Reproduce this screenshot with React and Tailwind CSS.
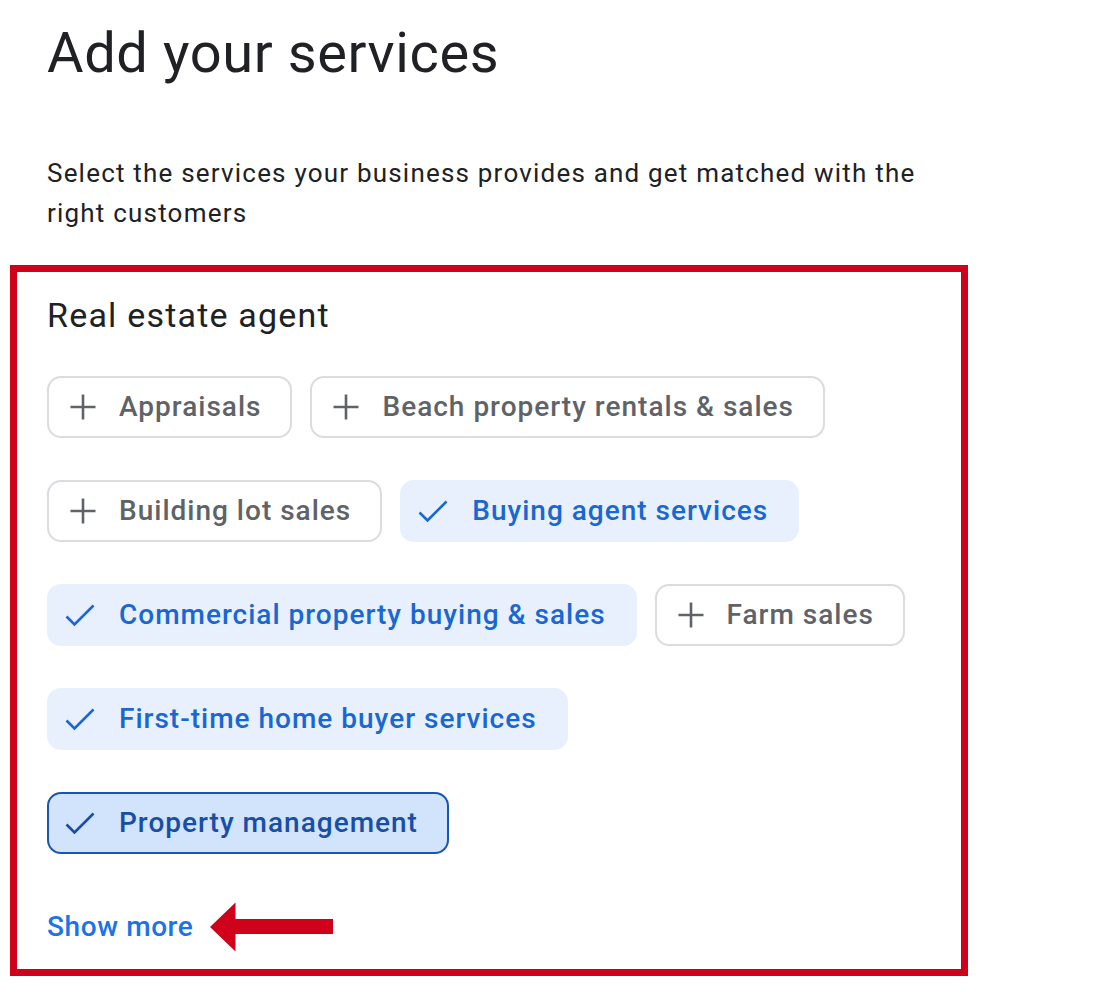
import React from "react";

const Plus = ({ className }) => (
  <svg width="28" height="28" viewBox="0 0 28 28" className={className}>
    <path d="M14 1.5V26.5M1.5 14H26.5" stroke="currentColor" strokeWidth="2.6" fill="none" />
  </svg>
);

const Check = ({ className }) => (
  <svg width="30" height="22" viewBox="0 0 30 22" className={className}>
    <path d="M1.5 12.5L9.5 20.5L28.5 1.5" stroke="currentColor" strokeWidth="2.6" fill="none" />
  </svg>
);

const Chip = ({ label, state }) => {
  if (state === "off") {
    return (
      <div className="flex h-[62px] items-center rounded-[14px] border-2 border-[#dadce0] bg-white pl-[20px] pr-[29px] text-[#5f6368]">
        <Plus className="mr-[22px] shrink-0 text-[#5f6368]" />
        <span className="whitespace-nowrap text-[28px] font-medium leading-none tracking-[1px]">{label}</span>
      </div>
    );
  }
  if (state === "on") {
    return (
      <div className="flex h-[62px] items-center rounded-[14px] border-2 border-[#e8f0fe] bg-[#e8f0fe] pl-[16px] pr-[29px] text-[#1967d2]">
        <Check className="mr-[24px] shrink-0" />
        <span className="whitespace-nowrap text-[28px] font-medium leading-none tracking-[1px]">{label}</span>
      </div>
    );
  }
  return (
    <div className="flex h-[62px] items-center rounded-[14px] border-2 border-[#1a56b0] bg-[#d2e3fc] pl-[16px] pr-[29px] text-[#174ea6]">
      <Check className="mr-[24px] shrink-0" />
      <span className="whitespace-nowrap text-[28px] font-medium leading-none tracking-[1px]">{label}</span>
    </div>
  );
};

export default function App() {
  return (
    <div className="min-h-[992px] w-[1094px] bg-white font-['Roboto',sans-serif]">
      <div className="pt-[19px] pl-[47px]">
        <h1 className="text-[56px] font-normal leading-[68px] tracking-[0.6px] text-[#202124]">Add your services</h1>
        <p className="mt-[66px] w-[900px] text-[26px] leading-[40px] tracking-[1.2px] text-[#202124]">
          Select the services your business provides and get matched with the right customers
        </p>
      </div>
      <div className="ml-[10px] mt-[32px] w-[958px] border-[7px] border-[#d0021b] pb-[22px] pl-[30px] pr-[30px] pt-[23px]">
        <h2 className="text-[34px] font-normal leading-[40px] tracking-[1.2px] text-[#202124]">Real estate agent</h2>
        <div className="mt-[41px] flex flex-col gap-[42px]">
          <div className="flex gap-[18px]">
            <Chip label="Appraisals" state="off" />
            <Chip label="Beach property rentals & sales" state="off" />
          </div>
          <div className="flex gap-[18px]">
            <Chip label="Building lot sales" state="off" />
            <Chip label="Buying agent services" state="on" />
          </div>
          <div className="flex gap-[18px]">
            <Chip label="Commercial property buying & sales" state="on" />
            <Chip label="Farm sales" state="off" />
          </div>
          <div className="flex gap-[18px]">
            <Chip label="First-time home buyer services" state="on" />
          </div>
          <div className="flex gap-[18px]">
            <Chip label="Property management" state="active" />
          </div>
        </div>
        <div className="mt-[53px] flex h-[40px] items-center">
          <span className="text-[28px] font-medium leading-[40px] tracking-[0.6px] text-[#1a73e8]">Show more</span>
          <svg width="124" height="50" viewBox="0 0 124 50" className="ml-[17px]">
            <path d="M0 25L25.5 0.5V17H123V32H25.5V49.5Z" fill="#d0021b" />
          </svg>
        </div>
      </div>
    </div>
  );
}
